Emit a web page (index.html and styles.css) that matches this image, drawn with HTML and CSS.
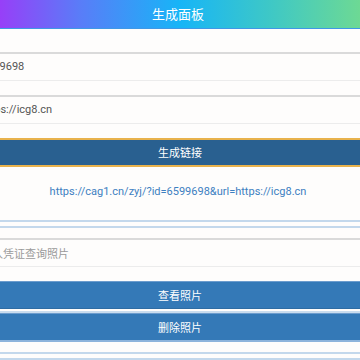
FILE: index.html
```html
<!DOCTYPE html>
<html lang="zh">
<head>
<meta charset="utf-8">
<title>生成面板</title>
<link rel="stylesheet" href="styles.css">
</head>
<body>
<header class="header">生成面板</header>
<main class="panel">
  <div class="field field-first"><span class="value">6599698</span></div>
  <div class="field field-second"><span class="value">https://icg8.cn</span></div>
  <div class="btn btn-focus">生成链接</div>
  <div class="result">https://cag1.cn/zyj/?id=6599698&amp;url=https://icg8.cn</div>
  <div class="rule rule-top"></div>
  <div class="field field-third"><span class="placeholder">输入凭证查询照片</span></div>
  <div class="btn btn-primary btn-view">查看照片</div>
  <div class="sep"></div>
  <div class="btn btn-primary btn-delete">删除照片</div>
  <div class="rule rule-bottom"></div>
</main>
</body>
</html>
```
FILE: styles.css
```css
html, body {
  margin: 0;
  padding: 0;
  background: #fefdfc;
  overflow: hidden;
  font-family: Roboto, "Noto Sans CJK SC", sans-serif;
}

.header {
  height: 28px;
  border-bottom: 1px solid #3f98e6;
  background: linear-gradient(90deg, #973ff8 0%, #5a7cf8 22%, #17b5f7 50%, #3ec8c6 75%, #6dd994 100%);
  color: #ffffff;
  font-family: "Noto Sans CJK SC", sans-serif;
  font-size: 13px;
  line-height: 27px;
  text-align: center;
  padding-right: 4px;
}

.panel {
  display: flex;
  flex-direction: column;
  margin: 0 -30px;
  padding-top: 23px;
}

.field {
  height: 26px;
  border-top: 2px solid #dadada;
  border-bottom: 1px solid #ececec;
  background: #fefdfc;
  padding-left: 11px;
  font-size: 11px;
  line-height: 26px;
  color: #555555;
}

.field-second {
  margin-top: 14px;
}

.placeholder {
  color: #9a9a9a;
  font-family: "Noto Sans CJK SC", sans-serif;
}

.btn {
  color: #ffffff;
  text-align: center;
  font-family: "Noto Sans CJK SC", sans-serif;
  font-size: 11px;
}

.btn-focus {
  margin-top: 14px;
  height: 25px;
  line-height: 25px;
  background: #296090;
  border-top: 2px solid #e8b24c;
  border-bottom: 2px solid #e8b24c;
}

.result {
  height: 53px;
  line-height: 50px;
  text-align: center;
  color: #3d80c1;
  font-size: 11px;
  padding-left: 2px;
  padding-right: 6px;
}

.rule {
  height: 4px;
  border-top: 2px solid #c3d8ec;
  border-bottom: 2px solid #c3d8ec;
}

.field-third {
  margin-top: 10px;
}

.btn-primary {
  height: 26px;
  line-height: 26px;
  background: #3479b7;
  border-top: 1px solid #6c9ccd;
  border-bottom: 1px solid #2e6ca3;
}

.btn-view {
  margin-top: 14px;
}

.sep {
  height: 2px;
  margin-top: 2px;
  background: #c9dcee;
}

.btn-delete {
  border-bottom: 2px solid #8db4dc;
}

.rule-bottom {
  margin-top: 10px;
}
```
